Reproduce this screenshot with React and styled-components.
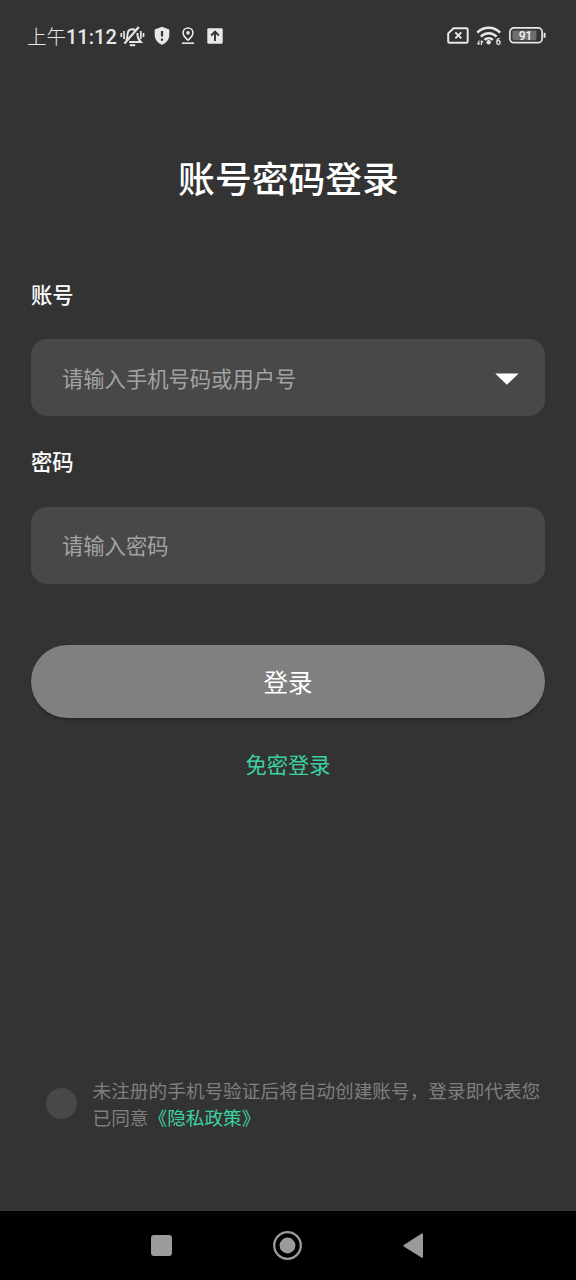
import React, { useState } from 'react'
import styled, { createGlobalStyle } from 'styled-components'

const Color = {
  Page: '#333333',
  Field: '#484848',
  Placeholder: '#a3a3a3',
  Button: '#808080',
  Green: '#3dd1a0',
  Muted: '#7f7f7f',
  Nav: '#9b9b9b',
  Status: '#e8e8e8'
}

const GlobalStyle = createGlobalStyle`
  * {
    box-sizing: border-box;
  }

  body {
    margin: 0;
    background: ${Color.Page};
    font-family: 'Noto Sans CJK SC', 'Noto Sans', sans-serif;
  }

  button, input {
    font-family: inherit;
    border: none;
    outline: none;
    padding: 0;
    margin: 0;
  }
`

const Screen = styled.div`
  width: 100%;
  height: 1280px;
  display: flex;
  flex-direction: column;
  background: ${Color.Page};
  overflow: hidden;
`

const StatusBar = styled.header`
  height: 71px;
  padding: 0 30px 0 27px;
  display: flex;
  justify-content: space-between;
  align-items: center;
  color: ${Color.Status};
`

const StatusGroup = styled.div`
  display: flex;
  align-items: center;
  gap: ${({ $gap }) => $gap || 0}px;

  svg {
    display: block;
    overflow: visible;
  }
`

const Clock = styled.div`
  display: flex;
  align-items: center;
  height: 26px;
  margin-right: 4px;
  white-space: nowrap;
`

const DayPart = styled.span`
  width: 39px;
  font-size: 19.6px;
  line-height: 26px;
  font-weight: 300;
`

const Time = styled.span`
  width: 50px;
  padding-top: 3px;
  font-family: Roboto, sans-serif;
  font-size: 20px;
  line-height: 24px;
  font-weight: 500;
`

const Main = styled.main`
  flex: 1;
  padding: 0 31px;
  display: flex;
  flex-direction: column;
`

const Title = styled.h1`
  margin: 80px -1px 0 0;
  color: #fff;
  font-size: 36.8px;
  line-height: 52px;
  font-weight: 500;
  text-align: center;
`

const Label = styled.label`
  margin-top: ${({ $top }) => $top}px;
  color: #fff;
  font-size: 21.3px;
  line-height: 30px;
  font-weight: 500;
`

const Field = styled.div`
  height: ${({ $height }) => $height || 77}px;
  margin-top: ${({ $top }) => $top || 30.5}px;
  padding: 0 26px 0 31px;
  display: flex;
  align-items: center;
  justify-content: space-between;
  background: ${Color.Field};
  border-radius: 16px;
`

const Input = styled.input`
  flex: 1;
  min-width: 0;
  height: 40px;
  margin-bottom: 1px;
  background: transparent;
  color: #fff;
  font-size: 21.3px;

  &::placeholder {
    color: ${Color.Placeholder};
    opacity: 1;
  }
`

const LoginButton = styled.button`
  height: 73px;
  margin-top: 61.5px;
  border-radius: 37px;
  background: ${Color.Button};
  box-shadow: 0 2px 3px rgba(0, 0, 0, 0.25);
  color: #fff;
  font-size: 24.5px;
  line-height: 36px;
`

const CodeLogin = styled.button`
  align-self: center;
  margin-top: 31px;
  background: transparent;
  color: ${Color.Green};
  font-size: 21.3px;
  line-height: 30px;
`

const Agreement = styled.div`
  margin: auto -10px 81px 15px;
  display: flex;
  align-items: center;
`

const Radio = styled.button`
  flex: none;
  width: 31px;
  height: 31px;
  border-radius: 50%;
  background: ${({ $checked }) => $checked ? Color.Green : Color.Field};
`

const AgreementText = styled.p`
  margin: 0 0 0 15.5px;
  color: ${Color.Muted};
  font-size: 18.67px;
  line-height: 27px;
  white-space: nowrap;
`

const PolicyLink = styled.span`
  color: ${Color.Green};
`

const NavBar = styled.nav`
  height: 69px;
  padding: 0 152px 0 151px;
  display: flex;
  align-items: center;
  justify-content: space-between;
  background: #000;

  svg {
    display: block;
  }
`

function MutedBell () {
  return (
    <svg width='25' height='22' viewBox='0 0 25 22' fill='none' stroke='currentColor' strokeWidth='2'>
      <path d='M6 15.6c1.1-1.3 1.4-2.6 1.4-5.2 0-3.7 1.9-6.2 5-6.2 1.1 0 2 .3 2.8.9M17.4 8c0 4.8.7 6.4 3.4 8.9H9.2' />
      <path d='M4.4 18.6L18.8 2' strokeWidth='2.2' />
      <path d='M9.8 20.2h5.4' strokeWidth='2' />
      <path d='M4 6v8M1.3 8v4M20.8 6v8M23.5 8v4' strokeWidth='1.7' />
    </svg>
  )
}

function Shield () {
  return (
    <svg width='16' height='20' viewBox='0 0 16 20'>
      <path d='M8 .8l7.3 2.7v5.6c0 4.5-2.9 8-7.3 9.9C3.6 17.1.7 13.6.7 9.1V3.5z' fill='currentColor' />
      <path d='M8 5v5.5M8 12.5v2.3' stroke={Color.Page} strokeWidth='2.2' />
    </svg>
  )
}

function LocationPin () {
  return (
    <svg width='14' height='18' viewBox='0 0 14 18' fill='none' stroke='currentColor' strokeWidth='1.6'>
      <path d='M7 13.2C4.3 10.8 2.1 8.5 2.1 5.9a4.9 4.9 0 0 1 9.8 0c0 2.6-2.2 4.9-4.9 7.3z' />
      <circle cx='7' cy='5.9' r='1.8' fill='currentColor' stroke='none' />
      <path d='M1 16.2h12' />
    </svg>
  )
}

function Upload () {
  return (
    <svg width='16' height='16' viewBox='0 0 16 16'>
      <rect x='.3' y='.3' width='15.4' height='15.4' rx='1.2' fill='currentColor' />
      <path d='M8 13V4M4.2 7.5L8 3.7l3.8 3.8' fill='none' stroke={Color.Page} strokeWidth='1.9' />
    </svg>
  )
}

function NoSim () {
  return (
    <svg width='22' height='17' viewBox='0 0 22 17' fill='none' stroke='currentColor' strokeWidth='2'>
      <path d='M6.5 1.2h13c.8 0 1.2.5 1.2 1.2v12.2c0 .8-.4 1.2-1.2 1.2H2.4c-.8 0-1.2-.4-1.2-1.2V6.4z' />
      <path d='M8.3 5.4l6 6M14.3 5.4l-6 6' />
    </svg>
  )
}

function Wifi () {
  return (
    <svg width='26' height='24' viewBox='0 -2 26 24' fill='none' stroke='currentColor' strokeWidth='2.5'>
      <path d='M1.3 6.7a15.6 15.6 0 0 1 22.8 0M4.8 10.6a10.8 10.8 0 0 1 15.8 0M8.5 13.9a6.3 6.3 0 0 1 8.4 0' />
      <circle cx='12.7' cy='16.2' r='2.2' fill='currentColor' stroke='none' />
      <path d='M2.9 14.4v4.4M1.2 16.9l1.7 1.8M5.4 19v-4.4M7.1 16.4l-1.7-1.8' strokeWidth='1.2' />
      <text x='19.8' y='19.2' fill='currentColor' stroke='none' fontFamily='Roboto, sans-serif' fontSize='8.8' fontWeight='700'>6</text>
    </svg>
  )
}

function Battery () {
  return (
    <svg width='37' height='17' viewBox='0 0 37 17'>
      <rect x='.9' y='.9' width='32.2' height='14.8' rx='4' fill='none' stroke='currentColor' strokeWidth='1.7' />
      <rect x='3.4' y='3.4' width='24' height='9.8' rx='1.4' fill='#6e6e6e' />
      <path d='M35.6 5.8v5' stroke='currentColor' strokeWidth='1.9' />
      <text x='16.3' y='12.7' textAnchor='middle' fill='#f4f4f4' fontFamily='Roboto, sans-serif' fontSize='12.2' fontWeight='500' letterSpacing='-.4'>91</text>
    </svg>
  )
}

const CaretIcon = styled.svg`
  margin-top: 2px;
`

function Caret () {
  return (
    <CaretIcon width='24' height='12' viewBox='0 0 24 12'>
      <path d='M.2 .4h23.4L11.9 11.7z' fill='#fff' />
    </CaretIcon>
  )
}

function App () {
  const [agreed, setAgreed] = useState(false)

  function toggleAgreed () {
    setAgreed(prevAgreed => !prevAgreed)
  }

  return (
    <Screen>
      <GlobalStyle />
      <StatusBar>
        <StatusGroup>
          <Clock>
            <DayPart>上午</DayPart>
            <Time>11:12</Time>
          </Clock>
          <StatusGroup $gap={8.5}>
            <MutedBell />
            <StatusGroup $gap={11.5}>
              <Shield />
              <LocationPin />
              <Upload />
            </StatusGroup>
          </StatusGroup>
        </StatusGroup>
        <StatusGroup $gap={7}>
          <NoSim />
          <Wifi />
          <Battery />
        </StatusGroup>
      </StatusBar>
      <Main>
        <Title>账号密码登录</Title>
        <Label htmlFor='account' $top={75.5}>账号</Label>
        <Field>
          <Input id='account' placeholder='请输入手机号码或用户号' />
          <Caret />
        </Field>
        <Label htmlFor='password' $top={29.5}>密码</Label>
        <Field $top={31.5} $height={76.5}>
          <Input id='password' type='password' placeholder='请输入密码' />
        </Field>
        <LoginButton>登录</LoginButton>
        <CodeLogin>免密登录</CodeLogin>
        <Agreement>
          <Radio $checked={agreed} onClick={toggleAgreed} />
          <AgreementText>
            未注册的手机号验证后将自动创建账号，登录即代表您
            <br />
            已同意<PolicyLink>《隐私政策》</PolicyLink>
          </AgreementText>
        </Agreement>
      </Main>
      <NavBar>
        <svg width='21' height='21' viewBox='0 0 21 21'>
          <rect width='21' height='21' rx='3' fill={Color.Nav} />
        </svg>
        <svg width='30' height='30' viewBox='0 0 30 30'>
          <circle cx='14.5' cy='14.5' r='13.3' fill='none' stroke={Color.Nav} strokeWidth='2.3' />
          <circle cx='14.5' cy='14.5' r='7.9' fill={Color.Nav} />
        </svg>
        <svg width='21' height='26' viewBox='0 0 21 26'>
          <path d='M19.2 1.3v22.8L1.2 12.7z' fill={Color.Nav} stroke={Color.Nav} strokeWidth='1.6' strokeLinejoin='round' />
        </svg>
      </NavBar>
    </Screen>
  )
}

export default App
